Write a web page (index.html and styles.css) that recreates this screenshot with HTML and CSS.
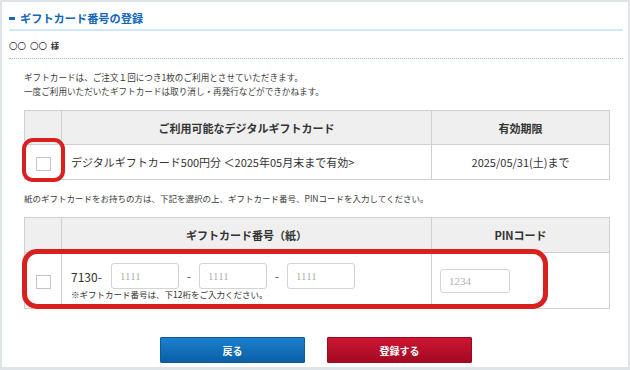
FILE: index.html
```html
<!DOCTYPE html>
<html lang="ja">
<head>
  <meta charset="UTF-8"/>
  <title>ギフトカード番号の登録</title>
  <link rel="stylesheet" href="styles.css">
</head>
<body>
  <div class="panel">
    <h2 class="title">ギフトカード番号の登録</h2>
    <div class="name">〇〇 〇〇 <b>様</b></div>

    <p class="intro">ギフトカードは、ご注文１回につき1枚のご利用とさせていただきます。<br>一度ご利用いただいたギフトカードは取り消し・再発行などができかねます。</p>

    <div class="tbl-wrap t1">
      <table class="gift">
        <colgroup><col class="c-check"><col class="c-main"><col class="c-side"></colgroup>
        <tr class="head"><th></th><th>ご利用可能なデジタルギフトカード</th><th>有効期限</th></tr>
        <tr class="row1">
          <td class="chk"><span class="box"></span></td>
          <td class="name-cell">デジタルギフトカード500円分 ＜2025年05月末まで有効&gt;</td>
          <td class="date">2025/05/31(土)まで</td>
        </tr>
      </table>
      <div class="ring ring1"></div>
    </div>

    <p class="note">紙のギフトカードをお持ちの方は、下記を選択の上、ギフトカード番号、PINコードを入力してください。</p>

    <div class="tbl-wrap t2">
      <table class="gift">
        <colgroup><col class="c-check"><col class="c-main"><col class="c-side"></colgroup>
        <tr class="head"><th></th><th>ギフトカード番号（紙）</th><th>PINコード</th></tr>
        <tr class="row2">
          <td class="chk"><span class="box"></span></td>
          <td class="num-cell">
            <div class="num-line">
              <span class="prefix">7130-</span>
              <input class="field" placeholder="1111">
              <span class="dash">-</span>
              <input class="field" placeholder="1111">
              <span class="dash">-</span>
              <input class="field" placeholder="1111">
            </div>
            <div class="hint">※ギフトカード番号は、下12桁をご入力ください。</div>
          </td>
          <td class="pin-cell"><input class="field pin" placeholder="1234"></td>
        </tr>
      </table>
      <div class="ring ring2"></div>
    </div>

    <div class="actions">
      <button class="btn back">戻る</button>
      <button class="btn submit">登録する</button>
    </div>
  </div>
</body>
</html>
```

FILE: styles.css
```css
*, *::before, *::after { box-sizing: border-box; margin: 0; padding: 0; }
html, body { height: 100%; background: #dfe4e8; }
body { font-family: 'Noto Sans CJK JP', 'Noto Sans', sans-serif; color: #333; overflow: hidden; }

.panel { margin: 2px 2px 3px; height: 365px; background: #fff; padding: 0 5px 0 7px; }

.title { display: flex; align-items: center; gap: 5px; padding: 9px 0 4px; line-height: 14px;
  font-size: 11.2px; font-weight: 700; color: #1167b8; border-bottom: 2px solid #cfe8f8;
}
.title::before { content: ''; width: 6px; height: 3px; background: #1167b8; }

.name { padding: 7px 0 6px; line-height: 14px; font-size: 8.5px; word-spacing: 2px; border-bottom: 1px dotted #8fc3ea; }
.name b { font-weight: 700; }

.intro { margin: 11px 0 0 15px; font-size: 8.6px; line-height: 14px; color: #3a3a3a; }
.note { margin: 11px 0 0 15px; font-size: 8.5px; line-height: 14px; color: #3a3a3a; }

.tbl-wrap { position: relative; margin: 12px 0 0 15px; width: 585px; }
.gift { width: 585px; border-collapse: collapse; table-layout: fixed; }
.c-check { width: 37px; }
.c-main { width: 370px; }
.c-side { width: 178px; }
.gift th, .gift td { border: 1px solid #cfcfcf; }
.gift th { background: #efefef; font-size: 11px; font-weight: 700; color: #333; }
.t1 .head { height: 34px; }
.t2 .head { height: 35px; }
.row1 { height: 35px; }
.row2 { height: 56px; }
.gift td { font-size: 11px; vertical-align: middle; }
.chk { text-align: center; }
.box { display: inline-block; width: 15px; height: 14px; border: 1px solid #c4c4c4; vertical-align: middle; }
.name-cell { padding-left: 9px; font-size: 11.5px; }
.date { text-align: center; font-size: 12.5px; }

.num-cell { padding: 2px 0 0 9px; }
.num-line { display: flex; align-items: center; }
.prefix { width: 40px; font-size: 12px; }
.dash { width: 20px; text-align: center; font-size: 11px; }
.field { width: 68px; height: 26px; border: 1px solid #d4d4d4; border-radius: 3px; padding-left: 8px;
  font-family: 'Liberation Serif', serif; font-size: 11px; color: #333; background: #fff; outline: none;
}
.field::placeholder { color: #b0b0b0; }
.hint { font-size: 8.5px; line-height: 12px; margin-top: -1px; }
.pin-cell { padding-left: 8px; }
.pin { width: 70px; height: 24px; }

.ring { position: absolute; border: 4px solid #d8201f; pointer-events: none; }
.ring1 { left: -2px; top: 28px; width: 43px; height: 44px; border-radius: 11px; }
.ring2 { left: -2px; top: 32px; width: 526px; height: 60px; border-radius: 15px; border-width: 5px; }

.actions { display: flex; justify-content: center; gap: 22px; margin-top: 28px; }
.btn { width: 145px; height: 26px; border-radius: 1px; color: #fff; font-family: inherit;
  font-size: 10px; font-weight: 700; cursor: pointer;
}
.back { background: linear-gradient(#1c80cd, #0a5fa7); border: 1px solid #0b5a9c; }
.submit { background: linear-gradient(#cd1533, #a30a22); border: 1px solid #9c0a20; }
```
